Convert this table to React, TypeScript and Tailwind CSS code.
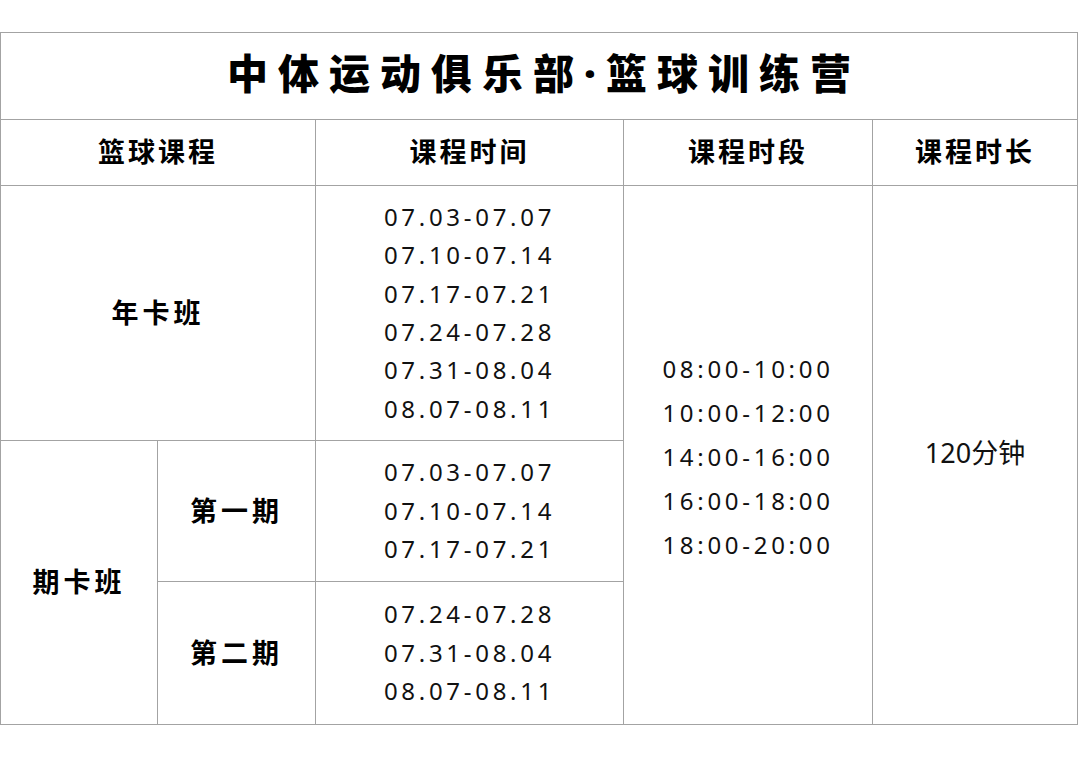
import React from "react";

const annualDates = [
  "07.03-07.07",
  "07.10-07.14",
  "07.17-07.21",
  "07.24-07.28",
  "07.31-08.04",
  "08.07-08.11",
];

const firstTerm = ["07.03-07.07", "07.10-07.14", "07.17-07.21"];
const secondTerm = ["07.24-07.28", "07.31-08.04", "08.07-08.11"];

const slots = [
  "08:00-10:00",
  "10:00-12:00",
  "14:00-16:00",
  "16:00-18:00",
  "18:00-20:00",
];

const cell = "bg-white flex items-center justify-center";
const head = "text-[27px] font-bold tracking-[3px] text-black";
const label = "text-[27px] font-bold tracking-[4px] text-black";

const DateList: React.FC<{ items: string[] }> = ({ items }) => (
  <div className="flex flex-col items-center text-[24px] leading-[38.4px] tracking-[3.7px] text-[#111]">
    {items.map((d, i) => (
      <span key={i}>{d}</span>
    ))}
  </div>
);

export default function App() {
  return (
    <div
      className="min-h-[757px] w-[1080px] bg-white pt-[32px]"
      style={{ fontFamily: '"Noto Sans", "Noto Sans CJK SC", sans-serif' }}
    >
      <div className="grid w-[1078px] grid-cols-[156px_157px_307px_248px_204px] grid-rows-[86px_65px_254px_140px_142px] gap-px border border-[#a3a3a3] bg-[#a3a3a3]">
        {/* title */}
        <div className={`${cell} col-span-5 pb-[5px]`}>
          <h1 className="pl-[10px] text-[41px] font-black tracking-[10px] text-black">
            中体运动俱乐部·篮球训练营
          </h1>
        </div>

        {/* header row */}
        <div className={`${cell} col-span-2`}>
          <span className={head}>篮球课程</span>
        </div>
        <div className={cell}>
          <span className={head}>课程时间</span>
        </div>
        <div className={cell}>
          <span className={head}>课程时段</span>
        </div>
        <div className={cell}>
          <span className={head}>课程时长</span>
        </div>

        {/* annual */}
        <div className={`${cell} col-span-2 col-start-1 row-start-3`}>
          <span className={label}>年卡班</span>
        </div>
        <div className={`${cell} col-start-3 row-start-3`}>
          <DateList items={annualDates} />
        </div>
        <div className={`${cell} col-start-4 row-start-3 row-span-3`}>
          <div className="flex flex-col items-center pt-[4px] text-[24px] leading-[44px] tracking-[3.7px] text-[#111]">
            {slots.map((s, i) => (
              <span key={i}>{s}</span>
            ))}
          </div>
        </div>
        <div className={`${cell} col-start-5 row-start-3 row-span-3`}>
          <span className="pb-[4px] text-[27px] text-[#111]">120分钟</span>
        </div>

        {/* terms */}
        <div className={`${cell} col-start-1 row-start-4 row-span-2`}>
          <span className={label}>期卡班</span>
        </div>
        <div className={`${cell} col-start-2 row-start-4`}>
          <span className={label}>第一期</span>
        </div>
        <div className={`${cell} col-start-3 row-start-4`}>
          <DateList items={firstTerm} />
        </div>
        <div className={`${cell} col-start-2 row-start-5`}>
          <span className={label}>第二期</span>
        </div>
        <div className={`${cell} col-start-3 row-start-5`}>
          <DateList items={secondTerm} />
        </div>
      </div>
    </div>
  );
}
